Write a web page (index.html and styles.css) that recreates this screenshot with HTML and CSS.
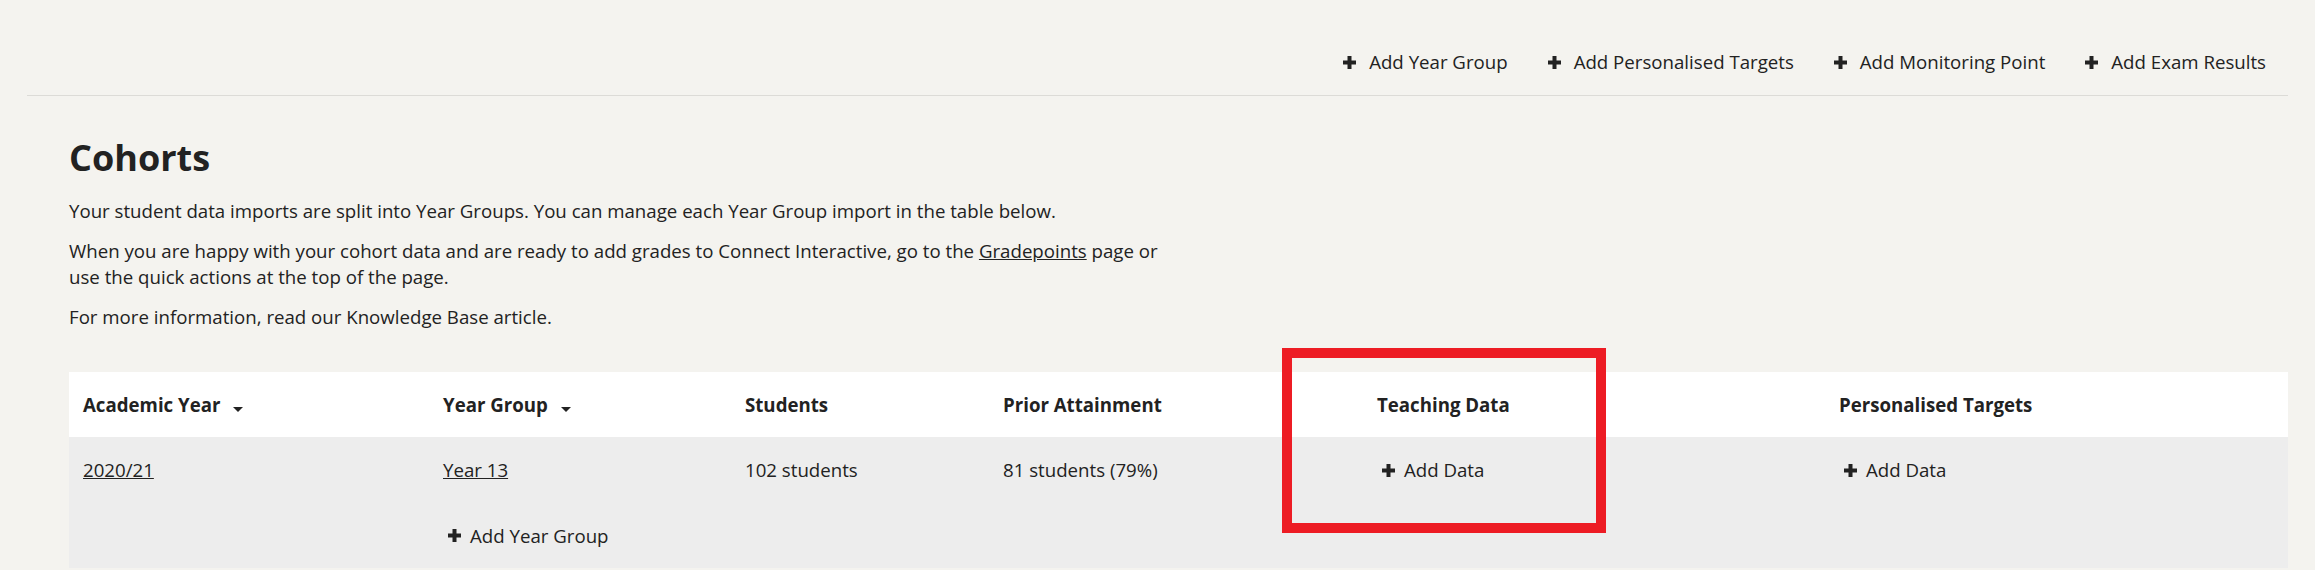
FILE: index.html
```html
<!DOCTYPE html>
<html>
<head>
  <meta charset="UTF-8">
  <title>Cohorts</title>
  <meta name="viewport" content="width=device-width, initial-scale=1.0"/>
  <link rel="stylesheet" href="styles.css">
</head>
<body>
  <div class="page">
    <div class="topbar">
      <a class="action" href="#"><svg class="plus" viewBox="0 0 13 13"><path d="M4.5 0h4v4.5h4.5v4h-4.5v4.5h-4v-4.5h-4.5v-4h4.5z"/></svg>Add Year Group</a>
      <a class="action" href="#"><svg class="plus" viewBox="0 0 13 13"><path d="M4.5 0h4v4.5h4.5v4h-4.5v4.5h-4v-4.5h-4.5v-4h4.5z"/></svg>Add Personalised Targets</a>
      <a class="action" href="#"><svg class="plus" viewBox="0 0 13 13"><path d="M4.5 0h4v4.5h4.5v4h-4.5v4.5h-4v-4.5h-4.5v-4h4.5z"/></svg>Add Monitoring Point</a>
      <a class="action" href="#"><svg class="plus" viewBox="0 0 13 13"><path d="M4.5 0h4v4.5h4.5v4h-4.5v4.5h-4v-4.5h-4.5v-4h4.5z"/></svg>Add Exam Results</a>
    </div>

    <div class="content">
      <h1>Cohorts</h1>
      <div class="intro">
        <p>Your student data imports are split into Year Groups. You can manage each Year Group import in the table below.</p>
        <p>When you are happy with your cohort data and are ready to add grades to Connect Interactive, go to the <a href="#">Gradepoints</a> page or use the quick actions at the top of the page.</p>
        <p>For more information, read our Knowledge Base article.</p>
      </div>

      <table class="cohorts">
        <colgroup>
          <col class="c-year"><col class="c-group"><col class="c-students"><col class="c-prior"><col class="c-teach"><col class="c-targets">
        </colgroup>
        <thead>
          <tr>
            <th>Academic Year<svg class="caret" viewBox="0 0 10 5"><path d="M0 0h10l-5 5z"/></svg></th>
            <th>Year Group<svg class="caret" viewBox="0 0 10 5"><path d="M0 0h10l-5 5z"/></svg></th>
            <th>Students</th>
            <th>Prior Attainment</th>
            <th class="marked">Teaching Data<span class="highlight"></span></th>
            <th>Personalised Targets</th>
          </tr>
        </thead>
        <tbody>
          <tr>
            <td><a href="#">2020/21</a></td>
            <td><a href="#">Year 13</a></td>
            <td>102 students</td>
            <td>81 students (79%)</td>
            <td><a class="add" href="#"><svg class="plus" viewBox="0 0 13 13"><path d="M4.5 0h4v4.5h4.5v4h-4.5v4.5h-4v-4.5h-4.5v-4h4.5z"/></svg>Add Data</a></td>
            <td><a class="add" href="#"><svg class="plus" viewBox="0 0 13 13"><path d="M4.5 0h4v4.5h4.5v4h-4.5v4.5h-4v-4.5h-4.5v-4h4.5z"/></svg>Add Data</a></td>
          </tr>
          <tr>
            <td></td>
            <td><a class="add" href="#"><svg class="plus" viewBox="0 0 13 13"><path d="M4.5 0h4v4.5h4.5v4h-4.5v4.5h-4v-4.5h-4.5v-4h4.5z"/></svg>Add Year Group</a></td>
            <td></td><td></td><td></td><td></td>
          </tr>
        </tbody>
      </table>
    </div>
  </div>
</body>
</html>
```

FILE: styles.css
```css
body { margin: 0; background: #f4f3ef; font-family: "Open Sans", "Liberation Sans", sans-serif; font-size: 18.67px; line-height: 26px; color: #222; }
a { color: #222; }
.page { padding: 0 27px; }

.topbar { display: flex; justify-content: flex-end; align-items: center; gap: 40px; padding: 49px 22px 20px 0; border-bottom: 1px solid #dcdbd7; }
.action { display: flex; align-items: center; text-decoration: none; }
.action .plus { margin-right: 13px; }
.plus { width: 13px; height: 13px; fill: #222; flex-shrink: 0; }

.content { padding-left: 42px; }
h1 { font-size: 36px; line-height: 49px; font-weight: 700; margin: 37px 0 16px; }
.intro { max-width: 1110px; }
.intro p { margin: 0 0 14px; }

.cohorts { width: 100%; margin-top: 42px; border-collapse: collapse; table-layout: fixed; }
.c-year { width: 360px; }
.c-group { width: 302px; }
.c-students { width: 258px; }
.c-prior { width: 374px; }
.c-teach { width: 462px; }
th, td { text-align: left; padding: 19.5px 14px; height: 26px; vertical-align: middle; }
th { background: #fff; font-weight: 700; }
td { background: #ededed; font-weight: 400; }
.caret { width: 10px; height: 5px; margin-left: 13px; fill: #222; }
.add { display: inline-flex; align-items: center; text-decoration: none; margin-left: 5px; }
.add .plus { margin-right: 9px; }

.marked { position: relative; }
.highlight { position: absolute; left: -81px; top: -24px; width: 324px; height: 185px; box-sizing: border-box; border: 10px solid #ed1c24; pointer-events: none; }
```
